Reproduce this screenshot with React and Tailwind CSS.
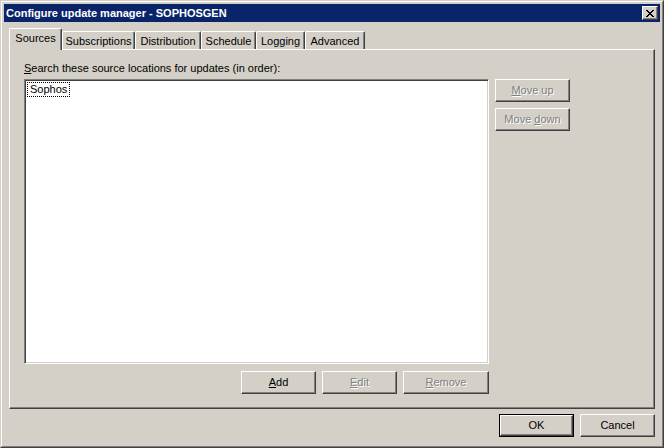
const raised =
  'border border-t-white border-l-white border-r-[#404040] border-b-[#404040] shadow-[inset_-1px_-1px_0_#808080]';
const sunken =
  'border border-t-[#808080] border-l-[#808080] border-r-white border-b-white shadow-[inset_1px_1px_0_#404040,inset_-1px_-1px_0_#d4d0c8]';
const disabledText = 'text-[#808080] [text-shadow:1px_1px_0_#fff]';

function Button({ children, disabled, isDefault, className = '' }) {
  const inner = (
    <div
      className={`flex h-full w-full items-center justify-center ${raised} ${
        disabled ? disabledText : 'text-black'
      }`}
    >
      {children}
    </div>
  );
  return (
    <div className={`${isDefault ? 'border border-black' : ''} ${className}`}>
      {inner}
    </div>
  );
}

const tabs = [
  { label: 'Sources', w: 'w-[53px]' },
  { label: 'Subscriptions', w: 'w-[73px]' },
  { label: 'Distribution', w: 'w-[66px]' },
  { label: 'Schedule', w: 'w-[55px]' },
  { label: 'Logging', w: 'w-[49px]' },
  { label: 'Advanced', w: 'w-[60px]' },
];

export default function App() {
  return (
    <div className="h-[448px] w-[664px] bg-[#d4d0c8] font-['Liberation_Sans',sans-serif] text-[11px] leading-[13px] text-black">
      <div className="h-full w-full border border-t-[#d4d0c8] border-l-[#d4d0c8] border-r-[#404040] border-b-[#404040]">
        <div className="flex h-full w-full flex-col border border-t-white border-l-white border-r-[#808080] border-b-[#808080] p-[2px]">
          {/* title bar */}
          <div className="flex h-[18px] items-center justify-between bg-[#0a246a] pl-[2px] pr-[2px]">
            <span className="font-bold text-white">Configure update manager - SOPHOSGEN</span>
            <div className={`flex h-[14px] w-[16px] items-center justify-center bg-[#d4d0c8] ${raised}`}>
              <svg width="8" height="7" viewBox="0 0 8 7" shapeRendering="crispEdges">
                <path
                  d="M0 0h2v1h-2zM6 0h2v1h-2zM1 1h2v1h-2zM5 1h2v1h-2zM2 2h4v1h-4zM3 3h2v1h-2zM2 4h4v1h-4zM1 5h2v1h-2zM5 5h2v1h-2zM0 6h2v1h-2zM6 6h2v1h-2z"
                  fill="#000"
                />
              </svg>
            </div>
          </div>

          {/* tabs */}
          <div className="ml-[5px] mt-[6px] flex h-[21px] items-end">
            {tabs.map((t, i) =>
              i === 0 ? (
                <div
                  key={t.label}
                  className={`relative z-10 -mb-px flex h-[22px] ${t.w} items-start justify-center rounded-tl-[2px] rounded-tr-[2px] border-l border-t border-r border-l-white border-t-white border-r-[#404040] bg-[#d4d0c8] pt-[3px] shadow-[inset_-1px_0_0_#808080]`}
                >
                  {t.label}
                </div>
              ) : (
                <div
                  key={t.label}
                  className={`flex h-[18px] ${t.w} items-start justify-center rounded-tl-[2px] rounded-tr-[2px] border-l border-t border-r border-l-white border-t-white border-r-[#404040] pt-[3px] shadow-[inset_-1px_0_0_#808080]`}
                >
                  {t.label}
                </div>
              )
            )}
          </div>

          {/* tab page */}
          <div className={`mx-[5px] flex h-[360px] flex-col ${raised} pl-[14px] pt-[12px]`}>
            <div>
              <span className="underline">S</span>earch these source locations for updates (in order):
            </div>
            <div className="mt-[4px] flex gap-[6px]">
              <div className={`h-[285px] w-[465px] bg-white ${sunken} p-[2px]`}>
                <div className="inline-block border border-dotted border-black px-[2px] leading-[13px]">
                  Sophos
                </div>
              </div>
              <div className="flex flex-col gap-[6px]">
                <Button disabled className="h-[23px] w-[75px]">
                  <span>
                    <span className="underline">M</span>ove up
                  </span>
                </Button>
                <Button disabled className="h-[23px] w-[75px]">
                  <span>
                    Move <span className="underline">d</span>own
                  </span>
                </Button>
              </div>
            </div>
            <div className="mt-[7px] flex w-[465px] justify-end gap-[6px]">
              <Button className="h-[23px] w-[75px]">
                <span>
                  <span className="underline">A</span>dd
                </span>
              </Button>
              <Button disabled className="h-[23px] w-[75px]">
                <span>
                  <span className="underline">E</span>dit
                </span>
              </Button>
              <Button disabled className="h-[23px] w-[86px]">
                <span>
                  <span className="underline">R</span>emove
                </span>
              </Button>
            </div>
          </div>

          {/* dialog buttons */}
          <div className="mr-[5px] mt-[5px] flex justify-end gap-[6px]">
            <Button isDefault className="h-[23px] w-[75px]">
              OK
            </Button>
            <Button className="h-[23px] w-[75px]">Cancel</Button>
          </div>
        </div>
      </div>
    </div>
  );
}
